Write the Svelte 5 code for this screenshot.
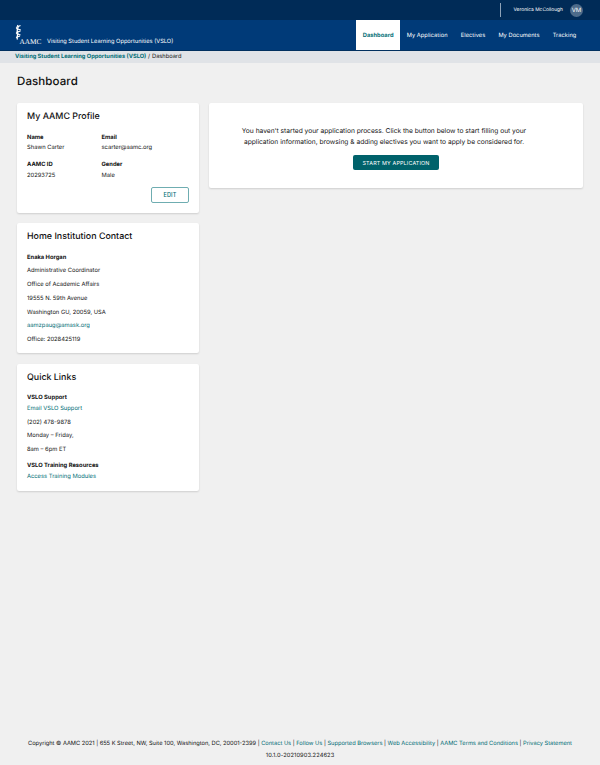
<script>
  const navItems = ['Dashboard', 'My Application', 'Electives', 'My Documents', 'Tracking'];
  const footerLinks = ['Contact Us', 'Follow Us', 'Supported Browsers', 'Web Accessibility', 'AAMC Terms and Conditions', 'Privacy Statement'];
</script>

<div class="page">
  <header>
    <div class="topbar">
      <span class="divider"></span>
      <span class="username">Veronica McCollough</span>
      <span class="avatar">VM</span>
    </div>
    <div class="navbar">
      <div class="brand">
        <svg class="logo" width="27" height="21" viewBox="0 0 27 21" aria-hidden="true">
          <!-- helix mark -->
          <path d="M2.5 1 C4.5 4 1 5.5 2.5 8 C4 10.5 1 12 2.5 15.5" stroke="#fff" stroke-width="1.3" fill="none"/>
          <path d="M5.5 1.5 L1 3.5 M1 4.5 L5.8 6 M5.5 7 L1 8.5 M1 9.5 L5.5 11 M5 12 L1 13.5" stroke="#fff" stroke-width="1.1" fill="none"/>
          <text x="4.5" y="20" class="logo-text">AAMC</text>
        </svg>
        <span class="brand-name">Visiting Student Learning Opportunities (VSLO)</span>
      </div>
      <nav>
        {#each navItems as item, i}
          <a href="#top" class:active={i === 0}>{item}</a>
        {/each}
      </nav>
    </div>
    <div class="crumbs">
      <a href="#top" class="crumb-link">Visiting Student Learning Opportunities (VSLO)</a> / Dashboard
    </div>
  </header>

  <main>
    <h1>Dashboard</h1>
    <div class="columns">
      <div class="side">
        <section class="card profile">
          <h2>My AAMC Profile</h2>
          <div class="fields">
            <div><b>Name</b><span>Shawn Carter</span></div>
            <div><b>Email</b><span>scarter@aamc.org</span></div>
            <div><b>AAMC ID</b><span>20293725</span></div>
            <div><b>Gender</b><span>Male</span></div>
          </div>
          <div class="edit-row"><button class="edit">EDIT</button></div>
        </section>

        <section class="card contact">
          <h2>Home Institution Contact</h2>
          <p><b>Enaka Horgan</b></p>
          <p>Administrative Coordinator</p>
          <p>Office of Academic Affairs</p>
          <p>19555 N. 59th Avenue</p>
          <p>Washington GU, 20059, USA</p>
          <p><a href="#top">aamzpaug@amask.org</a></p>
          <p>Office: 2028425119</p>
        </section>

        <section class="card links">
          <h2>Quick Links</h2>
          <div class="link-head"><b>VSLO Support</b><a href="#top">Email VSLO Support</a></div>
          <p>(202) 478-9878</p>
          <p>Monday – Friday,</p>
          <p>8am – 6pm ET</p>
          <div class="link-head second"><b>VSLO Training Resources</b><a href="#top">Access Training Modules</a></div>
        </section>
      </div>

      <section class="card intro">
        <p>You haven't started your application process. Click the button below to start filling out your application information, browsing &amp; adding electives you want to apply be considered for.</p>
        <button class="start">START MY APPLICATION</button>
      </section>
    </div>
  </main>

  <footer>
    <div>
      Copyright © AAMC 2021 | 655 K Street, NW, Suite 100, Washington, DC, 20001-2399
      {#each footerLinks as link}
        | <a href="#top">{link}</a>{' '}
      {/each}
    </div>
    <div class="version">10.1.0-20210903.224623</div>
  </footer>
</div>

<style>
  :global(body) {
    margin: 0;
    background: #f0f0f0;
    color: #111;
    font-family: Inter, "Liberation Sans", sans-serif;
    text-rendering: geometricPrecision;
  }

  .page {
    min-height: 765px;
    display: flex;
    flex-direction: column;
    font-size: 5.8px;
  }

  a {
    color: #006d75;
    text-decoration: none;
  }

  .topbar {
    height: 20px;
    background: #002b57;
    display: flex;
    align-items: center;
    justify-content: flex-end;
    padding-right: 17px;
    color: #fff;
    font-size: 4.9px;
  }

  .divider {
    width: 1px;
    height: 14px;
    background: #8fa3b8;
    margin-right: 12px;
  }

  .username {
    margin-right: 7px;
  }

  .avatar {
    width: 13px;
    height: 13px;
    border-radius: 50%;
    background: #4d6b8a;
    display: flex;
    align-items: center;
    justify-content: center;
    font-size: 6px;
  }

  .navbar {
    height: 30px;
    background: #003a78;
    border-bottom: 1px solid #00305f;
    display: flex;
    justify-content: space-between;
    color: #fff;
  }

  .brand {
    display: flex;
    align-items: flex-end;
    padding: 0 0 4px 15px;
  }

  .logo {
    display: block;
    margin: 0 5px 1px 0;
  }

  .logo-text {
    font-family: "Liberation Serif", serif;
    font-size: 7.3px;
    fill: #fff;
  }

  .brand-name {
    font-size: 5.7px;
    line-height: 9px;
  }

  nav {
    display: flex;
    padding-right: 17px;
  }

  nav a {
    color: #fff;
    font-size: 5.7px;
    letter-spacing: 0.05px;
    padding: 0 6.6px;
    display: flex;
    align-items: center;
  }

  nav a.active {
    background: #fff;
    color: #006d75;
    font-weight: 700;
  }

  .crumbs {
    height: 12px;
    line-height: 12px;
    background: #e0e3e7;
    padding-left: 15px;
    font-size: 5.7px;
    word-spacing: 0.3px;
  }

  .crumb-link {
    font-weight: 700;
    word-spacing: 0;
  }

  main {
    padding: 0 17px;
  }

  h1 {
    margin: 10px 0 14px;
    font-size: 11.5px;
    line-height: 16px;
    font-weight: 500;
    letter-spacing: 0.1px;
  }

  .columns {
    display: flex;
    align-items: flex-start;
    gap: 10px;
  }

  .side {
    width: 182px;
    flex: none;
    display: flex;
    flex-direction: column;
    gap: 10.5px;
  }

  .card {
    background: #fff;
    border-radius: 2px;
    box-shadow: 0 1px 2px rgba(0, 0, 0, 0.14);
    padding: 8px 10px;
    box-sizing: border-box;
  }

  h2 {
    margin: 0 0 10.5px;
    font-size: 8.9px;
    line-height: 12px;
    font-weight: 450;
  }

  b {
    font-weight: 700;
  }

  .card p {
    margin: 0;
    line-height: 8px;
    padding-bottom: 5.8px;
  }

  .profile {
    height: 109.5px;
  }

  .fields {
    display: grid;
    grid-template-columns: 74.5px 1fr;
    row-gap: 9px;
  }

  .fields div {
    display: flex;
    flex-direction: column;
    gap: 2.5px;
    line-height: 8px;
  }

  .edit-row {
    display: flex;
    justify-content: flex-end;
    margin-top: 7.5px;
  }

  .edit {
    width: 38px;
    height: 16px;
    padding: 0;
    border: 1px solid #6fadb1;
    border-radius: 2px;
    background: #fff;
    color: #006d75;
    font: 500 5.5px Inter, sans-serif;
    letter-spacing: 0.2px;
  }

  .contact {
    height: 130px;
  }

  .links {
    height: 127px;
  }

  .link-head {
    display: flex;
    flex-direction: column;
    gap: 2.5px;
    line-height: 8px;
    margin-top: 1px;
    margin-bottom: 6px;
  }

  .link-head.second {
    margin-top: 2.5px;
  }

  .intro {
    flex: 1;
    height: 85px;
    padding: 23px 54px 0 30px;
    text-align: center;
  }

  .intro p {
    font-size: 6.65px;
    line-height: 10.5px;
    padding-bottom: 8px;
    margin: 0;
  }

  .start {
    width: 86px;
    height: 15px;
    padding: 0;
    border: none;
    border-radius: 2px;
    background: #00626b;
    color: #fff;
    font: 400 5.4px Inter, sans-serif;
    letter-spacing: 0.15px;
    margin-left: 24px;
  }

  footer {
    margin-top: auto;
    padding-bottom: 3px;
    text-align: center;
    font-size: 5.7px;
    line-height: 12px;
  }

  .version {
    letter-spacing: 0.1px;
  }
</style>
